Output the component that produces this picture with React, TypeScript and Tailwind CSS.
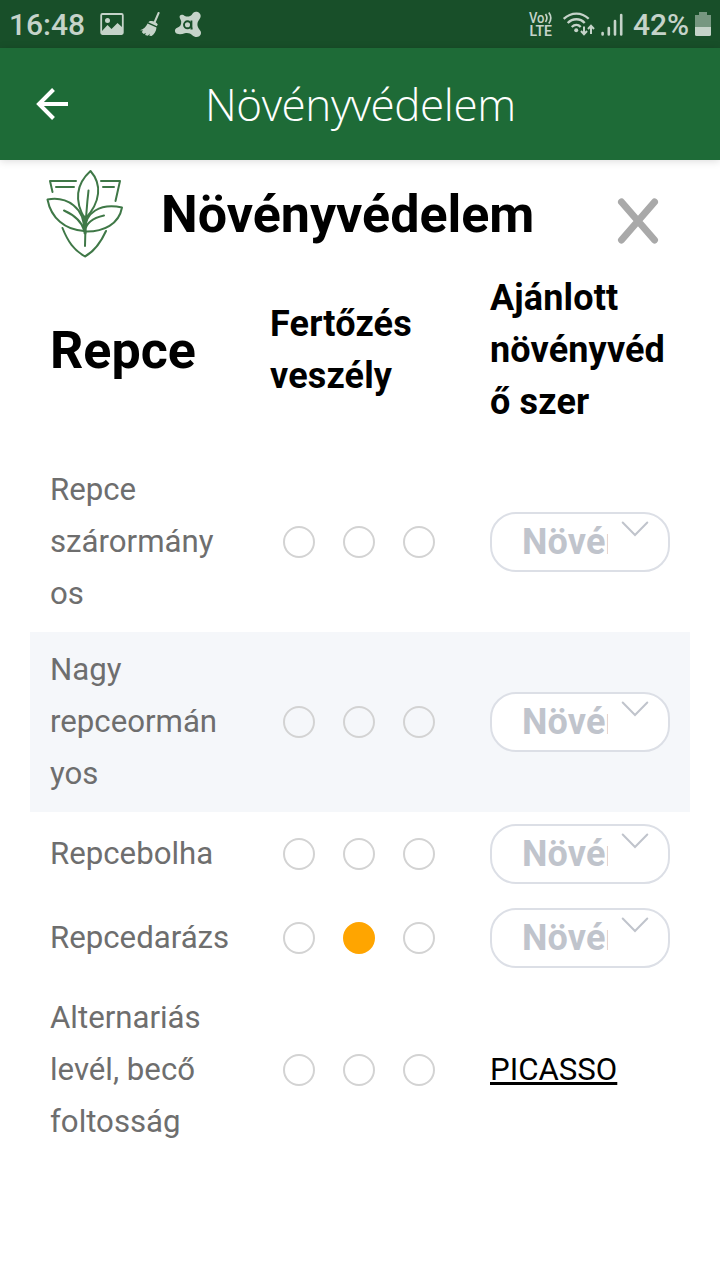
const rows = [
  { name: ['Repce', 'szárormány', 'os'], product: '', level: -1 },
  { name: ['Nagy', 'repceormán', 'yos'], product: '', level: -1 },
  { name: ['Repcebolha'], product: '', level: -1 },
  { name: ['Repcedarázs'], product: '', level: 1 },
  { name: ['Alternariás', 'levél, becő', 'foltosság'], product: 'PICASSO', level: -1 },
];

function StatusBar() {
  return (
    <div className="flex h-12 items-center justify-between bg-[#184f29] pl-[9px] pr-[9px] text-[#c5d3c9]">
      <div className="flex items-center">
        <span className="w-[90px] pt-px text-[30px] leading-none font-medium">16:48</span>
        <svg className="ml-px h-6 w-6" viewBox="0 0 24 24" fill="none">
          <rect x="1.2" y="2" width="21.6" height="20" rx="1.2" stroke="currentColor" strokeWidth="1.800" />
          <circle cx="7.500" cy="8.500" r="2.500" fill="currentColor" />
          <path d="M2 19l5.500-6 4 4 6-6 5 4.500V22H2z" fill="currentColor" />
        </svg>
        <svg className="ml-4 h-6 w-5" viewBox="0 0 20 24">
          <path d="M18.600 1L14.500 10.500" stroke="currentColor" strokeWidth="2" strokeLinecap="round" />
          <path d="M9.500 9.200c2-1 7.300.7 8.100 3.200l-.7 1.800-8.600-3.900z" fill="currentColor" />
          <path d="M7.600 11.400l8.900 4c-.3 4-2.300 6.600-4.900 8.600l-2.300-.2.600-2-2.100 1.900-2.700-.8.800-2-2.200 1.100-2-2 1.500-1.500L0 18.200c3.700-1.300 6-3.400 7.600-6.800z" fill="currentColor" />
        </svg>
        <svg className="ml-[14px] h-[27px] w-[28px]" viewBox="0 0 28 27">
          <path d="M6 4.500c1.500-1.300 3.500-.4 4.800.4 2.500 1 5.500.8 7-1.200C19 1.600 20.600.4 22.800.8c3 .5 4.600 3.300 3.600 5.800-.8 2-2.900 3.500-3 6.500-.1 2.300.8 3.900 2 5.400 2.300 2.200 2.200 5-.1 6.800-2.300 1.500-5 .8-7-1-2-2-4.500-2.700-7.500-2-2.500.8-5 1.400-7.700.5-2.900-1.200-2.800-4.900.1-6 3-1.300 4.200-3 4-6.400C7 8.300 4.700 6.600 6 4.500z" fill="currentColor" />
          <circle cx="13.500" cy="13.800" r="3.500" fill="none" stroke="#184f29" strokeWidth="1.900" />
          <path d="M17.400 9.500v8h1.200" fill="none" stroke="#184f29" strokeWidth="1.900" />
        </svg>
      </div>
      <div className="flex items-center">
        <svg className="h-7 w-7 overflow-visible" viewBox="0 0 28 28" fill="currentColor">
          <text x="1" y="13" fontSize="15" fontWeight="500" textLength="15.500" lengthAdjust="spacingAndGlyphs">Vo</text>
          <text x="1.500" y="26" fontSize="14.500" fontWeight="600" textLength="22.500" lengthAdjust="spacingAndGlyphs">LTE</text>
          <path d="M17.500 4q2.800 4 0 8M20.800 2.500q4 5.500 0 11" fill="none" stroke="currentColor" strokeWidth="1.700" />
        </svg>
        <svg className="ml-[6px] h-6 w-[34px]" viewBox="0 0 34 24" fill="none" stroke="currentColor">
          <path d="M1.700 6.800c7.500-7 18-7 25 0M5.700 11c5-5 12.500-5 17 0M9.700 15c3-2.700 6.500-2.700 9 0" strokeWidth="2.300" />
          <circle cx="14.200" cy="18.300" r="2" fill="currentColor" stroke="none" />
          <path d="M22 14.500v7.500M19 19l3 3.300 3-3.300M29 22v-8M26 17l3-3.300 3 3.300" strokeWidth="2" />
        </svg>
        <svg className="ml-[5px] h-6 w-[22px]" viewBox="0 0 22 24" stroke="currentColor" strokeWidth="2.600" strokeLinecap="round">
          <path d="M1.600 21v1.500M7.800 16v6.500M14 9v13.500M20.200 3v19.500" />
        </svg>
        <span className="ml-[10px] w-[56px] pt-px text-[30px] leading-none font-medium whitespace-nowrap">42%</span>
        <svg className="ml-[6px] h-6 w-4" viewBox="0 0 16 24" fill="currentColor">
          <path d="M4 0h8v3h4v12H0V3h4z" opacity=".55" />
          <path d="M0 15h16v7.500a1.500 1.500 0 0 1-1.500 1.500h-13A1.500 1.500 0 0 1 0 22.500z" />
        </svg>
      </div>
    </div>
  );
}

function Logo() {
  return (
    <svg className="h-[90px] w-[80px]" viewBox="0 0 80 90" fill="none" stroke="#3f7847" strokeWidth="2" strokeLinecap="round" strokeLinejoin="round">
      <path d="M31 12H5l2.500 11M11 18h18M56 12h19l-4.500 20M58 18h11" />
      <path d="M45.500 2C31 15 29 32 40 50C56 33 57 15 45.500 2z" />
      <path d="M2.500 30.500C22 27 40 39 39 62C20 61 6 49 2.500 30.500z" />
      <path d="M77 38.500C56 34 39 43 40 62.500C59 63 74 55 77 38.500z" />
      <path d="M43.500 21.500C42 38 40 46 40 77M19 41.500C29 46 37 53 39.500 62M59 46.500C48 49 41 54 40 62" />
      <path d="M39.500 48l.5 16" strokeWidth="3" />
      <path d="M17.500 59C23 73 29 81 40 87.500C50 82 56 73 61 62" />
    </svg>
  );
}

function ProductSelect() {
  return (
    <button className="flex h-[60px] w-[180px] items-start rounded-[26px] border-2 border-[#dcdfe6] bg-white pl-[30px] text-left">
      <span className="w-[86px] overflow-hidden text-[36px] leading-[56px] font-bold tracking-[0.15px] whitespace-nowrap text-[#c0c4cc]">
        Növén
      </span>
      <svg className="mt-[6px] ml-[12px] h-[18px] w-[30px]" viewBox="0 0 30 18" fill="none" stroke="#c0c4cc" strokeWidth="2" strokeLinecap="round">
        <path d="M2.700 2.500l12.300 12.500L27.300 2.500" />
      </svg>
    </button>
  );
}

export default function App() {
  return (
    <div className="h-[1280px] w-[720px] overflow-hidden bg-white font-[Roboto,sans-serif]">
      <StatusBar />
      <header className="relative flex h-28 items-center bg-[#1e6b37] px-9 text-white shadow-[0_1px_8px_rgba(0,0,0,0.15)]">
        <svg className="h-8 w-8" viewBox="0 0 32 32" fill="none" stroke="currentColor" strokeWidth="4">
          <path d="M32 16H3M17.500 1.500L3 16l14.500 14.500" />
        </svg>
        <h1 className="ml-[137px] font-['Open_Sans',sans-serif] text-[44px] leading-none font-light tracking-[-0.4px] whitespace-nowrap">
          Növényvédelem
        </h1>
      </header>

      <div className="flex h-[88px] items-start pt-[9px] pl-[45px]">
        <Logo />
        <h2 className="ml-[36px] w-[420px] pt-[14px] text-[52px] leading-[64px] font-bold text-black">Növényvédelem</h2>
        <button className="mt-[29px] ml-[36px]">
          <svg className="h-[46px] w-[42px]" viewBox="0 0 42 46" stroke="#a9a9a9" strokeWidth="7" strokeLinecap="round">
            <path d="M4.500 4l33 38M37.500 4l-33 38" />
          </svg>
        </button>
      </div>

      <div className="mx-[30px]">
        <div className="grid h-[204px] grid-cols-3 items-center text-[36px] leading-[52px] font-bold tracking-[0.15px] text-black">
          <div className="px-5 pt-0.5 text-[52px] tracking-normal">Repce</div>
          <div className="px-5">Fertőzés<br />veszély</div>
          <div className="px-5">Ajánlott<br />növényvéd<br />ő szer</div>
        </div>
        {rows.map((row, index) => (
          <div key={index} className={`grid grid-cols-3 items-center py-3 ${index === 1 ? 'bg-[#f5f7fa]' : ''}`}>
            <div className="px-5 text-[31.200px] leading-[52px] whitespace-nowrap text-[#6e6e6e]">
              {row.name.map((line) => (
                <div key={line}>{line}</div>
              ))}
            </div>
            <div className="flex gap-7 pl-[33px]">
              {[0, 1, 2].map((dot) => (
                <span
                  key={dot}
                  className={`h-8 w-8 rounded-full border-2 ${row.level === dot ? 'border-[#ffa500] bg-[#ffa500]' : 'border-[#d3d3d3]'}`}
                />
              ))}
            </div>
            <div className="px-5 text-[31.200px] leading-[52px]">
              {row.product ? (
                <a className="text-black underline decoration-[3px] underline-offset-2 [text-decoration-skip-ink:none]">{row.product}</a>
              ) : (
                <ProductSelect />
              )}
            </div>
          </div>
        ))}
      </div>
    </div>
  );
}
